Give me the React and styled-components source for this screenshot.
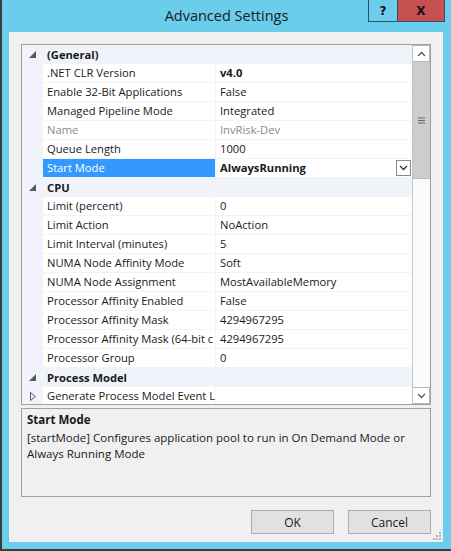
import React from "react";
import styled, { createGlobalStyle } from "styled-components";

const GlobalStyle = createGlobalStyle`
	body {
		margin: 0;
		background: #3c3c3c;
		font-family: "Open Sans", "Noto Sans", sans-serif;
	}
`;

const sections = [
	{
		name: "(General)",
		rows: [
			{ label: ".NET CLR Version", value: "v4.0", bold: true },
			{ label: "Enable 32-Bit Applications", value: "False" },
			{ label: "Managed Pipeline Mode", value: "Integrated" },
			{ label: "Name", value: "InvRisk-Dev", dim: true },
			{ label: "Queue Length", value: "1000" },
			{ label: "Start Mode", value: "AlwaysRunning", bold: true, selected: true },
		],
	},
	{
		name: "CPU",
		rows: [
			{ label: "Limit (percent)", value: "0" },
			{ label: "Limit Action", value: "NoAction" },
			{ label: "Limit Interval (minutes)", value: "5" },
			{ label: "NUMA Node Affinity Mode", value: "Soft" },
			{ label: "NUMA Node Assignment", value: "MostAvailableMemory" },
			{ label: "Processor Affinity Enabled", value: "False" },
			{ label: "Processor Affinity Mask", value: "4294967295" },
			{ label: "Processor Affinity Mask (64-bit c", value: "4294967295" },
			{ label: "Processor Group", value: "0" },
		],
	},
	{
		name: "Process Model",
		rows: [{ label: "Generate Process Model Event L", value: "", collapsed: true }],
	},
];

const App = () => {
	return (
		<>
			<GlobalStyle />
			<Screen>
				<Window>
					<TitleBar>
						<span />
						<Title>Advanced Settings</Title>
						<Caption>
							<CapButton>?</CapButton>
							<CapButton $close>X</CapButton>
						</Caption>
					</TitleBar>
					<Client>
						<Grid>
							<List>
								{sections.map((sec) => (
									<React.Fragment key={sec.name}>
										<Category>
											<Gutter>
												<svg width="7" height="7" viewBox="0 0 7 7">
													<polygon points="7,0 7,7 0,7" fill="#595959" />
												</svg>
											</Gutter>
											<CatName>{sec.name}</CatName>
										</Category>
										{sec.rows.map((r) => (
											<Row key={r.label}>
												<Gutter>
													{r.collapsed && (
														<svg width="6" height="9" viewBox="0 0 6 9">
															<polygon points="0.5,0.5 5.5,4.5 0.5,8.5" fill="none" stroke="#595959" />
														</svg>
													)}
												</Gutter>
												<Label $selected={r.selected} $dim={r.dim}>
													{r.label}
												</Label>
												<Value $bold={r.bold} $dim={r.dim}>
													<span>{r.value}</span>
													{r.selected && (
														<DropButton>
															<svg width="9" height="6" viewBox="0 0 9 6">
																<polyline points="1,1 4.5,4.5 8,1" fill="none" stroke="#333" strokeWidth="1.3" />
															</svg>
														</DropButton>
													)}
												</Value>
											</Row>
										))}
									</React.Fragment>
								))}
							</List>
							<ScrollBar>
								<ArrowBox>
									<svg width="9" height="6" viewBox="0 0 9 6">
										<polyline points="1,5 4.5,1.5 8,5" fill="none" stroke="#555" strokeWidth="1.3" />
									</svg>
								</ArrowBox>
								<Thumb>
									<svg width="7" height="7" viewBox="0 0 7 7">
										<path d="M0 1h7M0 3.5h7M0 6h7" stroke="#666" strokeWidth="1" />
									</svg>
								</Thumb>
								<Track />
								<ArrowBox>
									<svg width="9" height="6" viewBox="0 0 9 6">
										<polyline points="1,1 4.5,4.5 8,1" fill="none" stroke="#555" strokeWidth="1.3" />
									</svg>
								</ArrowBox>
							</ScrollBar>
						</Grid>
						<Description>
							<DescTitle>Start Mode</DescTitle>
							<DescText>
								[startMode] Configures application pool to run in On Demand Mode or Always Running Mode
							</DescText>
						</Description>
						<Buttons>
							<Button>OK</Button>
							<Button>Cancel</Button>
						</Buttons>
						<Grip>
							<svg width="8" height="8" viewBox="0 0 8 8">
								<g fill="#b5b5b5">
									<rect x="6" y="0" width="2" height="2" />
									<rect x="3" y="3" width="2" height="2" />
									<rect x="6" y="3" width="2" height="2" />
									<rect x="0" y="6" width="2" height="2" />
									<rect x="3" y="6" width="2" height="2" />
									<rect x="6" y="6" width="2" height="2" />
								</g>
							</svg>
						</Grip>
					</Client>
				</Window>
			</Screen>
		</>
	);
};

export default App;

const Screen = styled.div`
	width: 451px;
	height: 551px;
	display: flex;
	padding-left: 2px;
	box-sizing: border-box;
	overflow: hidden;
`;

const Window = styled.div`
	width: 449px;
	height: 549px;
	background: #6acdeb;
	display: flex;
	flex-direction: column;
`;

const TitleBar = styled.div`
	height: 32px;
	display: grid;
	grid-template-columns: 1fr auto 1fr;
	align-items: start;
`;

const Title = styled.div`
	font-size: 14.5px;
	color: #1c1c1c;
	line-height: 32px;
`;

const Caption = styled.div`
	justify-self: end;
	display: flex;
	margin-right: 6px;
`;

const CapButton = styled.div`
	width: ${(p) => (p.$close ? "46px" : "28px")};
	height: 21px;
	border: 1px solid #35505c;
	border-top: none;
	margin-left: -1px;
	background: ${(p) => (p.$close ? "#c75050" : "#6acdeb")};
	display: flex;
	align-items: center;
	justify-content: center;
	font-family: "DejaVu Sans", sans-serif;
	font-weight: bold;
	font-size: 12px;
	color: #111;
`;

const Client = styled.div`
	position: relative;
	flex: 1;
	margin: 0 8px 7px 7px;
	background: #f0f0f0;
	padding: 12px 12px 0;
	display: flex;
	flex-direction: column;
`;

const Grid = styled.div`
	height: 359px;
	border: 1px solid #a0a0a0;
	background: #ffffff;
	display: flex;
	overflow: hidden;
`;

const List = styled.div`
	flex: 1;
	display: flex;
	flex-direction: column;
	overflow: hidden;
	font-size: 11.2px;
	color: #1a1a1a;
`;

const Category = styled.div`
	flex: none;
	height: 19px;
	display: flex;
	align-items: center;
	background: #f0f3f9;
`;

const Gutter = styled.div`
	width: 21px;
	height: 18px;
	flex: none;
	display: flex;
	align-items: center;
	justify-content: flex-end;
	padding-right: 7px;
	box-sizing: border-box;
	background: #f0f3f9;
`;

const CatName = styled.div`
	font-weight: bold;
	padding-left: 4px;
	white-space: nowrap;
`;

const Row = styled.div`
	flex: none;
	height: 19px;
	display: flex;
	border-bottom: 1px solid #f0f3f9;
	box-sizing: border-box;
`;

const Label = styled.div`
	width: 173px;
	flex: none;
	padding-left: 4px;
	box-sizing: border-box;
	line-height: 18px;
	white-space: nowrap;
	overflow: hidden;
	border-right: 1px solid #f0f3f9;
	background: ${(p) => (p.$selected ? "#3399ff" : "#ffffff")};
	color: ${(p) => (p.$selected ? "#ffffff" : p.$dim ? "#8a8a8a" : "#1a1a1a")};
`;

const Value = styled.div`
	flex: 1;
	display: flex;
	align-items: center;
	justify-content: space-between;
	padding-left: 4px;
	line-height: 18px;
	white-space: nowrap;
	font-weight: ${(p) => (p.$bold ? "bold" : "normal")};
	color: ${(p) => (p.$dim ? "#8a8a8a" : "#1a1a1a")};
`;

const DropButton = styled.div`
	width: 15px;
	height: 16px;
	margin-right: 1px;
	border: 1px solid #8a8a8a;
	box-sizing: border-box;
	background: #fff;
	display: flex;
	align-items: center;
	justify-content: center;
`;

const ScrollBar = styled.div`
	width: 17px;
	flex: none;
	display: flex;
	flex-direction: column;
	background: #f3f3f3;
	border-left: 1px solid #c4c4c4;
`;

const ArrowBox = styled.div`
	height: 17px;
	flex: none;
	background: #fff;
	border: 1px solid #b8b8b8;
	border-left: none;
	box-sizing: border-box;
	display: flex;
	align-items: center;
	justify-content: center;
`;

const Thumb = styled.div`
	height: 116px;
	flex: none;
	background: #cdcdcd;
	border-bottom: 1px solid #bdbdbd;
	display: flex;
	align-items: center;
	justify-content: center;
`;

const Track = styled.div`
	flex: 1;
	background: #fafafa;
`;

const Description = styled.div`
	margin-top: 3px;
	height: 83px;
	border: 1px solid #a0a0a0;
	background: #f0f0f0;
	padding: 2px 5px;
	font-size: 11.5px;
	color: #1a1a1a;
`;

const DescTitle = styled.div`
	font-weight: bold;
	line-height: 17px;
`;

const DescText = styled.div`
	line-height: 16px;
	margin-top: 2px;
	padding-right: 8px;
`;

const Buttons = styled.div`
	margin-top: 13px;
	display: flex;
	justify-content: flex-end;
	gap: 14px;
`;

const Button = styled.div`
	width: 83px;
	height: 24px;
	box-sizing: border-box;
	border: 1px solid #adadad;
	background: #e1e1e1;
	display: flex;
	align-items: center;
	justify-content: center;
	font-size: 12px;
	color: #1a1a1a;
`;

const Grip = styled.div`
	position: absolute;
	right: 2px;
	bottom: 2px;
	line-height: 0;
`;
